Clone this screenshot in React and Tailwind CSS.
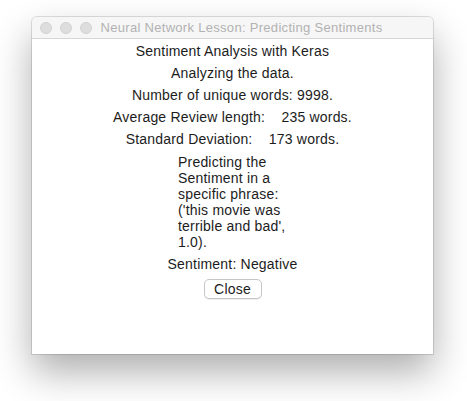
import React from "react";

export default function App() {
  const font = { fontFamily: '"Liberation Sans", Arial, sans-serif' };
  return (
    <div className="w-[467px] h-[401px] bg-white overflow-hidden pt-[17px] pl-[32px]" style={font}>
      <div className="w-[401px] h-[337px] bg-white rounded-t-[5px] shadow-[0_18px_38px_rgba(0,0,0,0.32),0_0_0_1px_rgba(0,0,0,0.12)] flex flex-col">
        <div className="relative h-[22px] bg-[#f6f6f6] rounded-t-[5px] border-b border-[#d6d6d6] flex items-center justify-center">
          <div className="absolute left-[8px] top-[5px] flex gap-[8px]">
            <span className="w-[12px] h-[12px] rounded-full bg-[#dedede] border border-[#d2d2d2]" />
            <span className="w-[12px] h-[12px] rounded-full bg-[#dedede] border border-[#d2d2d2]" />
            <span className="w-[12px] h-[12px] rounded-full bg-[#dedede] border border-[#d2d2d2]" />
          </div>
          <span className="text-[13px] tracking-[0.3px] text-[#b2b2b2] leading-none pl-[18px]">
            Neural Network Lesson: Predicting Sentiments
          </span>
        </div>
        <div className="flex flex-col items-center text-[14px] tracking-[0.2px] text-[#1c1c1c]">
          <div className="leading-[22px] mt-[1px]">Sentiment Analysis with Keras</div>
          <div className="leading-[22px]">Analyzing the data.</div>
          <div className="leading-[22px]">Number of unique words: 9998.</div>
          <div className="leading-[22px] whitespace-pre">Average Review length:    235 words.</div>
          <div className="leading-[22px] whitespace-pre">Standard Deviation:    173 words.</div>
          <div className="w-[109px] leading-[16px] mt-[4px] text-left whitespace-nowrap">
            Predicting the<br />
            Sentiment in a<br />
            specific phrase:<br />
            ('this movie was<br />
            terrible and bad',<br />
            1.0).
          </div>
          <div className="leading-[22px] mt-[3px]">Sentiment: Negative</div>
          <button className="mt-[4px] w-[58px] h-[20px] bg-white border border-[#c6c6c6] rounded-[5px] shadow-[0_1px_0_rgba(0,0,0,0.06)] text-[14px] tracking-[0.2px] text-[#1c1c1c] leading-none flex items-center justify-center">
            Close
          </button>
        </div>
      </div>
    </div>
  );
}
